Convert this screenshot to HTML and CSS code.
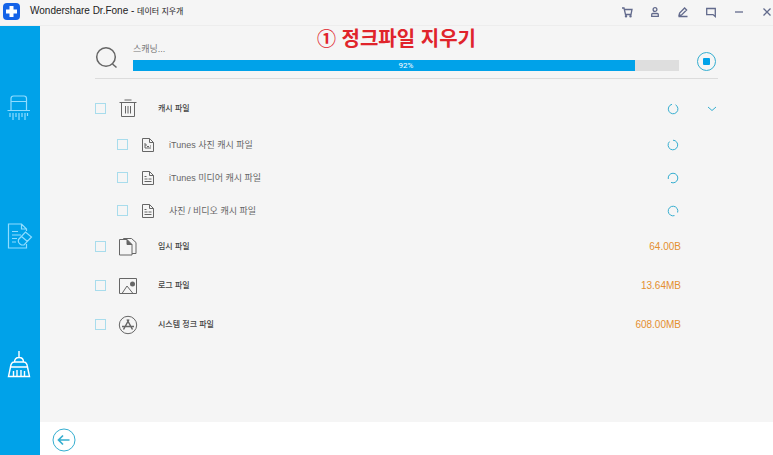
FILE: index.html
```html
<!DOCTYPE html>
<html lang="ko">
<head>
    <meta charset="UTF-8">
    <meta name="viewport" content="width=device-width, initial-scale=1.0">
    <title>Wondershare Dr.Fone - 데이터 지우개</title>
    <link rel="stylesheet" href="styles.css">
</head>
<body>
    <!-- Title bar -->
    <header class="titlebar">
        <svg class="logo" viewBox="0 0 17 17" aria-hidden="true">
            <rect width="17" height="17" rx="4" fill="#1463e8"/>
            <path d="M8.5 3v11M3 8.500h11" stroke="#fff" stroke-width="4"/>
        </svg>
        <h1 class="app-title">Wondershare Dr.Fone - <span class="app-title-ko">데이터 지우개</span></h1>
        <div class="window-tools">
            <button type="button" class="tool-button" aria-label="Cart">
                <svg viewBox="0 0 14 14"><path d="M2 3h2l1.500 6.500h5.500l1-5H4.500"/><circle cx="6" cy="11.300" r=".6"/><circle cx="10.500" cy="11.300" r=".6"/></svg>
            </button>
            <button type="button" class="tool-button" aria-label="Account">
                <svg viewBox="0 0 14 14"><circle cx="7" cy="4.500" r="1.900"/><path d="M3.700 11.300V9.500q0-1 1-1h4.600q1 0 1 1v1.800z"/></svg>
            </button>
            <button type="button" class="tool-button" aria-label="Feedback">
                <svg viewBox="0 0 14 14"><path d="M3 10.500l.6-2.500 5-5 2 2-5 5zM2.500 11.500h9"/></svg>
            </button>
            <button type="button" class="tool-button" aria-label="Messages">
                <svg viewBox="0 0 14 14"><path d="M2.700 3.500h8.600v8L9 9.600H2.700z"/></svg>
            </button>
            <button type="button" class="tool-button" aria-label="Minimize">
                <svg viewBox="0 0 14 14"><path d="M3 7h8"/></svg>
            </button>
            <button type="button" class="tool-button" aria-label="Close">
                <svg viewBox="0 0 14 14"><path d="M3.500 3.500l7 7M10.500 3.500l-7 7"/></svg>
            </button>
        </div>
    </header>

    <div class="workspace">
        <!-- Sidebar -->
        <nav class="sidebar" aria-label="Tools">
            <button type="button" class="side-button" aria-label="Erase all data">
                <svg viewBox="0 0 28 28"><path d="M6 16.500V4.500q0-2.500 2.500-2.500h10.500q2.500 0 2.500 2.500v12M6 7.500h15.500M2.500 16.500h22.500M5 19v4M8 19v7M11 19v4M14 19v7M17 19v4M20 19v7M22.500 19v3"/></svg>
            </button>
            <button type="button" class="side-button" aria-label="Erase private data">
                <svg viewBox="0 0 28 28"><path d="M21.500 9V7l-5-5H3.500v24h18v-4M16.500 2v5h5M7 9.500h6M7 13h9M7 16.500h5M7 20h4M13.500 17.500l7-7.500 6 5-7.500 8h-2.500q-4-2-3-5.500zM16.500 14.500l6 5"/></svg>
            </button>
            <button type="button" class="side-button active" aria-label="Free up space">
                <svg viewBox="0 0 28 28"><path d="M14 1v6M9.500 12q0-4.500 4.500-4.500t4.500 4.500M5.500 17q.5-5 4-5h9q3.500 0 4 5zM5.500 17L3.500 26.500h21l-2-9.500M8.500 21v5M12 20v6M16 20v6M19.500 21v5"/></svg>
            </button>
        </nav>

        <div class="content">
            <main class="main">
                <!-- Scan progress -->
                <section class="scan">
                    <svg class="scan-icon" viewBox="0 0 24 24" aria-hidden="true"><circle cx="11" cy="11" r="9.300"/><path d="M17.500 18l4 3.500"/></svg>
                    <div class="scan-status">
                        <span class="scan-label" id="scan-label">스캐닝...</span>
                        <div class="progress" role="progressbar" aria-labelledby="scan-label" aria-valuemin="0" aria-valuemax="100" aria-valuenow="92">
                            <div class="progress-fill" style="width: 92%"></div>
                            <span class="progress-text">92%</span>
                        </div>
                    </div>
                    <button type="button" class="stop-button" aria-label="Stop"></button>
                </section>

                <!-- Junk file list -->
                <ul class="file-list">
                    <li class="row">
                        <input type="checkbox" class="check" id="cache">
                        <svg class="row-icon" viewBox="0 0 20 20" aria-hidden="true"><path d="M1.500 3.500h17M6.500 1h7M3.500 3.500v14h13v-14M7.500 7v7.500M10 7v7.500M12.500 7v7.500"/></svg>
                        <label class="name" for="cache">캐시 파일</label>
                        <svg class="spinner" viewBox="0 0 12 12" aria-hidden="true"><path d="M8.500 1.800A4.800 4.800 0 1 1 5 1.300"/></svg>
                        <button type="button" class="expand" aria-label="Collapse"><svg viewBox="0 0 12 12"><path d="M2 4l4 3.500L10 4"/></svg></button>
                    </li>
                    <li class="row child">
                        <input type="checkbox" class="check" id="itunes-photo">
                        <svg class="row-icon" viewBox="0 0 12 14" aria-hidden="true"><path d="M.5.500h7l4 4v9H.5zM7.500.500v4h4M3 5v5h6M3 7h2M5 8.500h2M8 8h1"/></svg>
                        <label class="name" for="itunes-photo">iTunes 사진 캐시 파일</label>
                        <svg class="spinner" viewBox="0 0 12 12" aria-hidden="true"><path d="M2.500 2.600A4.800 4.800 0 1 0 6 1.200"/></svg>
                    </li>
                    <li class="row child">
                        <input type="checkbox" class="check" id="itunes-media">
                        <svg class="row-icon" viewBox="0 0 12 14" aria-hidden="true"><path d="M.5.500h7l4 4v9H.5zM7.500.500v4h4M2.500 5.500h2M2.500 8h3M6.500 8h3M2.500 10.500h7"/></svg>
                        <label class="name" for="itunes-media">iTunes 미디어 캐시 파일</label>
                        <svg class="spinner" viewBox="0 0 12 12" aria-hidden="true"><path d="M1.300 7A4.800 4.800 0 1 1 4 10.400"/></svg>
                    </li>
                    <li class="row child">
                        <input type="checkbox" class="check" id="photo-video">
                        <svg class="row-icon" viewBox="0 0 12 14" aria-hidden="true"><path d="M.5.500h7l4 4v9H.5zM7.500.500v4h4M2.500 5.500h2M2.500 8h3M6.500 8h3M2.500 10.500h7"/></svg>
                        <label class="name" for="photo-video">사진 / 비디오 캐시 파일</label>
                        <svg class="spinner" viewBox="0 0 12 12" aria-hidden="true"><path d="M7.500 10.600A4.800 4.800 0 1 1 10.600 7.500"/></svg>
                    </li>
                    <li class="row">
                        <input type="checkbox" class="check" id="temp">
                        <svg class="row-icon" viewBox="0 0 20 20" aria-hidden="true"><path d="M1.500 2.500h7.500l5 5v10.500h-12.500zM9 2.500v5h5M4.500 2.500l1-1h8l4.500 4v11h-4"/><path class="solid" d="M9 2.500l5 5h-5z"/></svg>
                        <label class="name" for="temp">임시 파일</label>
                        <span class="size">64.00B</span>
                    </li>
                    <li class="row">
                        <input type="checkbox" class="check" id="log">
                        <svg class="row-icon" viewBox="0 0 20 20" aria-hidden="true"><path d="M1.500 2.500h17v15h-17zM4 17.500l5-7.500 6 7.500"/><circle class="solid" cx="14.500" cy="8" r="2.500"/></svg>
                        <label class="name" for="log">로그 파일</label>
                        <span class="size">13.64MB</span>
                    </li>
                    <li class="row">
                        <input type="checkbox" class="check" id="system">
                        <svg class="row-icon" viewBox="0 0 20 20" aria-hidden="true"><circle cx="10" cy="10" r="8.700"/><path class="thick" d="M9 4.500l5.500 10M11 4.500l-5.500 10M4 11.500h12"/></svg>
                        <label class="name" for="system">시스템 정크 파일</label>
                        <span class="size">608.00MB</span>
                    </li>
                </ul>
            </main>

            <footer class="footer">
                <button type="button" class="back-button" aria-label="Back">
                    <svg viewBox="0 0 24 24"><circle cx="12" cy="12" r="11"/><path class="arrow" d="M17.500 12h-11M11 7.500L6.500 12l4.500 4.500"/></svg>
                </button>
            </footer>
        </div>
    </div>

    <!-- Step caption over the window -->
    <p class="step-caption"><span class="step-number">①</span> 정크파일 지우기</p>
</body>
</html>
```
FILE: styles.css
```css
:root {
    --blue: #00a2e9;
    --light-blue: #a8dcec;
    --teal: #35aed0;
    --bg: #f5f5f5;
    --line: #dcdcdc;
    --icon: #666;
    --text: #444;
    --orange: #e48f30;
}

* {
    box-sizing: border-box;
}

body {
    display: flex;
    flex-direction: column;
    position: relative;
    min-height: 100vh;
    margin: 0;
    background-color: var(--bg);
    color: var(--text);
    font-family: "Liberation Sans", "Noto Sans CJK KR", sans-serif;
    font-size: 10px;
}

button {
    display: flex;
    align-items: center;
    justify-content: center;
    padding: 0;
    border: 0;
    background: none;
    cursor: pointer;
}

svg {
    display: block;
    fill: none;
    stroke: var(--icon);
}

/* Title bar */
.titlebar {
    display: flex;
    align-items: center;
    height: 26px;
    padding: 0 0 2px 3px;
    border-bottom: 1px solid #ededed;
}

.logo {
    width: 17px;
    height: 17px;
    stroke: none;
}

.app-title {
    flex: 1;
    margin: 0 0 0 10px;
    color: #222;
    font-size: 10px;
    font-weight: normal;
    line-height: 16px;
}

.app-title-ko {
    font-size: 8px;
}

.window-tools {
    display: flex;
}

.tool-button {
    width: 28px;
    height: 24px;
}

.tool-button:last-child {
    width: 12px;
    margin-left: 8px;
}

.tool-button svg {
    flex-shrink: 0;
    width: 14px;
    height: 14px;
    stroke: #626a8c;
    stroke-width: 1.3;
}

.workspace {
    display: flex;
    flex: 1;
}

/* Sidebar */
.sidebar {
    display: flex;
    flex-direction: column;
    align-items: center;
    gap: 100px;
    width: 40px;
    padding: 68px 2px 0 0;
    background-color: var(--blue);
}

.side-button svg {
    width: 28px;
    height: 28px;
    stroke: #8fdcff;
    stroke-width: 1.2;
}

.side-button.active svg {
    stroke: #fff;
    stroke-width: 1.4;
}

.content {
    display: flex;
    flex: 1;
    flex-direction: column;
}

.main {
    flex: 1;
    padding: 16px 55px 0;
}

/* Scan progress */
.scan {
    display: flex;
    align-items: flex-start;
    height: 37px;
    border-bottom: 1px solid var(--line);
}

.scan-icon {
    width: 24px;
    height: 24px;
    margin-top: 4px;
    stroke-width: 1.5;
}

.scan-status {
    flex: 1;
    margin: 0 18px 0 14px;
}

.scan-label {
    display: block;
    height: 18px;
    color: #777;
    font-size: 9px;
    line-height: 14px;
}

.progress {
    position: relative;
    height: 11px;
    background-color: #dedede;
}

.progress-fill {
    height: 100%;
    background-color: var(--blue);
}

.progress-text {
    position: absolute;
    inset: 0;
    color: #fff;
    font-family: Roboto, sans-serif;
    font-size: 8px;
    line-height: 11px;
    text-align: center;
}

.stop-button {
    width: 19px;
    height: 19px;
    margin: 10px 2px 0 0;
    border: 1px solid var(--teal);
    border-radius: 50%;
}

.stop-button::before {
    content: "";
    width: 7px;
    height: 7px;
    border-radius: 1px;
    background-color: var(--blue);
}

/* Junk file list */
.file-list {
    margin: 0;
    padding: 10px 37px 0 0;
    list-style: none;
}

.row {
    display: flex;
    position: relative;
    align-items: center;
    height: 39px;
}

.row.child {
    height: 33px;
    padding-left: 22px;
}

.check {
    width: 11px;
    height: 11px;
    margin: 0 12px 0 0;
    border: 1px solid var(--light-blue);
    background-color: var(--bg);
    appearance: none;
}

.check:checked {
    background-color: var(--blue);
}

.row-icon {
    width: 20px;
    height: 20px;
    margin-right: 20px;
}

.child .row-icon {
    width: 12px;
    height: 14px;
    margin: 0 15px 0 2px;
}

.solid {
    fill: var(--icon);
    stroke: none;
}

.thick {
    stroke-width: 1.5;
}

.name {
    flex: 1;
    font-size: 8px;
    font-weight: 500;
    line-height: 14px;
}

.child .name {
    color: #666;
    font-size: 9px;
    font-weight: normal;
}

.spinner {
    width: 12px;
    height: 12px;
    margin-right: 2px;
    stroke: var(--teal);
}

.expand {
    position: absolute;
    right: -37px;
    width: 12px;
    height: 12px;
}

.expand svg {
    width: 12px;
    height: 12px;
    stroke: var(--teal);
}

.size {
    color: var(--orange);
    font-size: 10px;
}

/* Footer */
.footer {
    display: flex;
    align-items: center;
    height: 33px;
    padding: 3px 12px 0;
    background-color: #fff;
}

.back-button svg {
    width: 24px;
    height: 24px;
    stroke: var(--teal);
}

.back-button .arrow {
    stroke-width: 1.7;
}

.step-caption {
    position: absolute;
    top: 24px;
    left: 41%;
    margin: 0;
    color: #e0242b;
    font-family: "Noto Sans CJK KR", sans-serif;
    font-size: 20px;
    font-weight: bold;
    line-height: 28px;
}

.step-number {
    font-size: 19px;
}
```
